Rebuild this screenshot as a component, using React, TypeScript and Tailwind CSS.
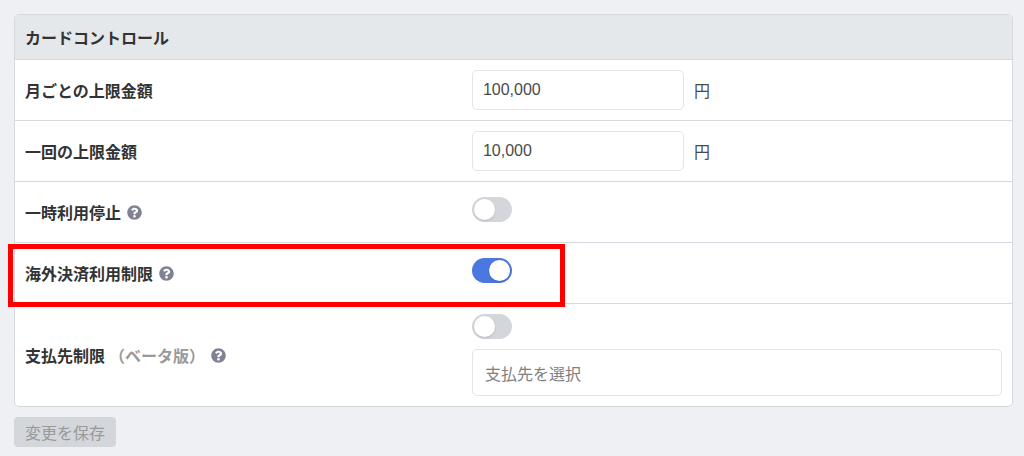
import { useState } from 'react'
import type { ReactNode } from 'react'
import { FaQuestionCircle } from 'react-icons/fa'

type RowProps = {
  label: string
  htmlFor: string
  note?: string
  help?: boolean
  highlighted?: boolean
  children: ReactNode
}

function Row({ label, htmlFor, note, help, highlighted, children }: RowProps) {
  return (
    <div className="relative grid grid-cols-[13fr_16fr] items-center border-t border-[#d5d8de]">
      <div className="flex min-w-0 items-center px-[10px] leading-6">
        <label htmlFor={htmlFor} className="font-bold">
          {label}
        </label>
        {note && <span className="ml-1 font-bold text-[#999999]">{note}</span>}
        {help && (
          <button type="button" aria-label="ヘルプ" className="ml-[6px] text-[15px] text-[#7f8292]">
            <FaQuestionCircle />
          </button>
        )}
      </div>
      <div className="min-w-0 p-[10px]">{children}</div>
      {highlighted && (
        <div className="pointer-events-none absolute -left-[7px] top-px z-10 h-[63px] w-[557px] border-[5px] border-[#ff0000]" />
      )}
    </div>
  )
}

function AmountInput({ id, defaultValue }: { id: string; defaultValue: string }) {
  return (
    <div className="flex items-center gap-[10px]">
      <input
        id={id}
        type="text"
        inputMode="numeric"
        defaultValue={defaultValue}
        className="h-10 w-[212px] rounded-[5px] border border-[#e4e4e4] bg-white px-[10px] font-['Liberation_Sans',sans-serif] text-[#4a4a4a] outline-none focus:border-[#4a77e0]"
      />
      <span className="text-[#4a4a4a]">円</span>
    </div>
  )
}

function Toggle({ id, defaultChecked = false }: { id: string; defaultChecked?: boolean }) {
  const [checked, setChecked] = useState(defaultChecked)

  return (
    <input
      id={id}
      type="checkbox"
      role="switch"
      checked={checked}
      onChange={(e) => setChecked(e.target.checked)}
      className="flex h-[25px] w-10 cursor-pointer appearance-none items-center rounded-full bg-[#d3d6db] px-[2px] transition-colors before:size-[21px] before:rounded-full before:bg-white before:shadow-sm checked:justify-end checked:bg-[#4a77e0]"
    />
  )
}

export default function App() {
  return (
    <div className="min-h-screen bg-[#eff0f4] pt-[14px] pr-[11px] pb-[9px] pl-[14px] font-['Noto_Sans_CJK_JP',sans-serif] text-base text-[#333333]">
      <form onSubmit={(e) => e.preventDefault()}>
        <section className="rounded-[5px] border border-[#d5d8de] bg-white">
          <h2 className="rounded-t-[4px] bg-[#e5e8eb] px-[10px] py-[10px] leading-6 font-bold">
            カードコントロール
          </h2>
          <Row label="月ごとの上限金額" htmlFor="monthly-limit">
            <AmountInput id="monthly-limit" defaultValue="100,000" />
          </Row>
          <Row label="一回の上限金額" htmlFor="single-limit">
            <AmountInput id="single-limit" defaultValue="10,000" />
          </Row>
          <Row label="一時利用停止" htmlFor="suspend" help>
            <div className="pt-[5px] pb-[10px]">
              <Toggle id="suspend" />
            </div>
          </Row>
          <Row label="海外決済利用制限" htmlFor="overseas" help highlighted>
            <div className="pt-[5px] pb-[10px]">
              <Toggle id="overseas" defaultChecked />
            </div>
          </Row>
          <Row label="支払先制限" htmlFor="payee-limit" note="（ベータ版）" help>
            <div className="flex flex-col gap-[10px]">
              <Toggle id="payee-limit" />
              <input
                type="text"
                aria-label="支払先"
                placeholder="支払先を選択"
                className="h-[47px] w-full rounded-[5px] border border-[#e4e4e4] bg-white px-3 outline-none placeholder:text-[#808080] focus:border-[#4a77e0]"
              />
            </div>
          </Row>
        </section>
        <button
          type="submit"
          disabled
          className="mt-[10px] h-[30px] rounded-[4px] bg-[#d3d6db] px-[11px] text-[#999999]"
        >
          変更を保存
        </button>
      </form>
    </div>
  )
}
